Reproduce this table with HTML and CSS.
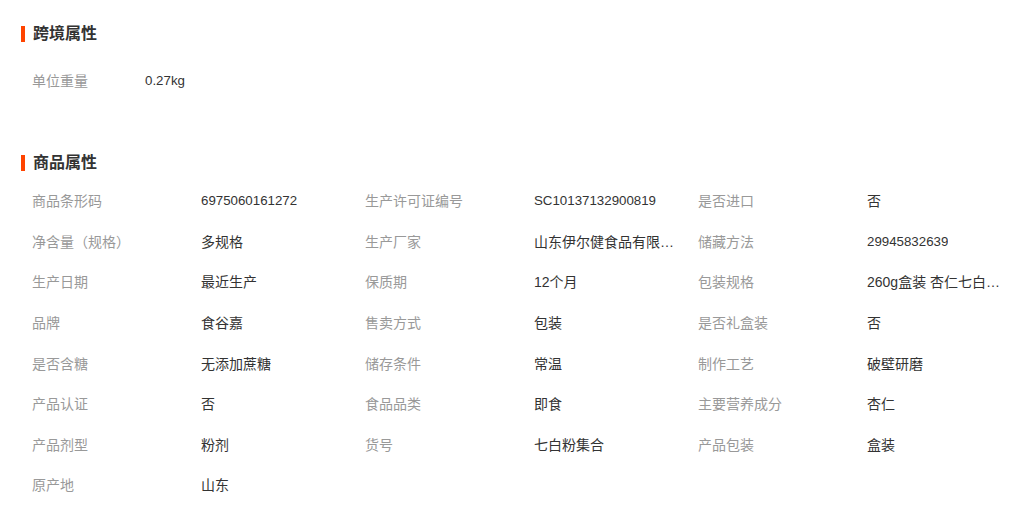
FILE: index.html
```html
<!DOCTYPE html>
<html lang="zh-CN">
<head>
<meta charset="utf-8">
<link rel="stylesheet" href="styles.css">
</head>
<body>
<div class="page">
  <section class="section section-cross">
    <h2 class="title">跨境属性</h2>
    <div class="cross-row">
      <span class="label cross-label">单位重量</span>
      <span class="value num">0.27kg</span>
    </div>
  </section>
  <section class="section section-goods">
    <h2 class="title">商品属性</h2>
    <div class="grid">
      <div class="item"><span class="label">商品条形码</span><span class="value num">6975060161272</span></div>
      <div class="item"><span class="label">生产许可证编号</span><span class="value num">SC10137132900819</span></div>
      <div class="item"><span class="label">是否进口</span><span class="value">否</span></div>
      <div class="item"><span class="label">净含量（规格）</span><span class="value">多规格</span></div>
      <div class="item"><span class="label">生产厂家</span><span class="value">山东伊尔健食品有限公司</span></div>
      <div class="item"><span class="label">储藏方法</span><span class="value num">29945832639</span></div>
      <div class="item"><span class="label">生产日期</span><span class="value">最近生产</span></div>
      <div class="item"><span class="label">保质期</span><span class="value">12个月</span></div>
      <div class="item"><span class="label">包装规格</span><span class="value">260g盒装 杏仁七白粉集合装</span></div>
      <div class="item"><span class="label">品牌</span><span class="value">食谷嘉</span></div>
      <div class="item"><span class="label">售卖方式</span><span class="value">包装</span></div>
      <div class="item"><span class="label">是否礼盒装</span><span class="value">否</span></div>
      <div class="item"><span class="label">是否含糖</span><span class="value">无添加蔗糖</span></div>
      <div class="item"><span class="label">储存条件</span><span class="value">常温</span></div>
      <div class="item"><span class="label">制作工艺</span><span class="value">破壁研磨</span></div>
      <div class="item"><span class="label">产品认证</span><span class="value">否</span></div>
      <div class="item"><span class="label">食品品类</span><span class="value">即食</span></div>
      <div class="item"><span class="label">主要营养成分</span><span class="value">杏仁</span></div>
      <div class="item"><span class="label">产品剂型</span><span class="value">粉剂</span></div>
      <div class="item"><span class="label">货号</span><span class="value">七白粉集合</span></div>
      <div class="item"><span class="label">产品包装</span><span class="value">盒装</span></div>
      <div class="item"><span class="label">原产地</span><span class="value">山东</span></div>
    </div>
  </section>
</div>
</body>
</html>
```

FILE: styles.css
```css
* { box-sizing: border-box; }
html, body {
  margin: 0;
  padding: 0;
  background: #fff;
}
body {
  font-family: "Liberation Sans", "Noto Sans CJK SC", sans-serif;
  font-size: 14px;
  color: #333;
}
.page {
  padding: 24px 0 0 21px;
}
.title {
  margin: 0;
  height: 20px;
  line-height: 20px;
  font-size: 16px;
  font-weight: bold;
  color: #333;
  display: flex;
  align-items: center;
  gap: 8px;
}
.title::before {
  content: "";
  display: block;
  width: 4px;
  height: 16px;
  background: #ff4400;
}
.cross-row {
  display: flex;
  align-items: center;
  height: 20px;
  line-height: 20px;
  margin-top: 27px;
  padding-left: 11px;
}
.cross-label {
  width: 113px;
}
.section-goods {
  margin-top: 62px;
}
.grid {
  display: grid;
  grid-template-columns: repeat(3, 333px);
  grid-auto-rows: 40.57px;
  margin-top: 8px;
  padding-left: 11px;
}
.item {
  display: flex;
  align-items: center;
  height: 40.57px;
  line-height: 20px;
}
.label {
  color: #999;
  white-space: nowrap;
}
.item .label {
  width: 169px;
  flex: none;
}
.value {
  color: #333;
  white-space: nowrap;
}
.num {
  font-size: 13.3px;
}
.item .value {
  max-width: 140px;
  overflow: hidden;
  text-overflow: ellipsis;
}
```
